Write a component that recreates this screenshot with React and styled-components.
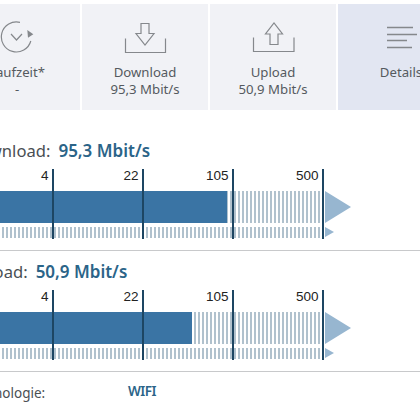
import styled, { createGlobalStyle } from "styled-components";

const GlobalStyle = createGlobalStyle`
  html, body {
    margin: 0;
    padding: 0;
    background: #fff;
  }
  body {
    width: 420px;
    height: 420px;
    overflow: hidden;
    font-family: "Noto Sans", "Open Sans", sans-serif;
  }
`;

const Page = styled.div`
  width: 466px;
  margin-left: -46px;
  padding-top: 4px;
`;

const TileRow = styled.div`
  display: flex;
  gap: 2px;
  width: 600px;
`;

const Tile = styled.div`
  width: 126px;
  height: 106px;
  flex: none;
  display: flex;
  flex-direction: column;
  align-items: center;
  background: ${(p) => (p.$active ? "#e2e6f2" : "#f1f2f6")};
  color: #555a5f;
  font-size: 13.2px;
  line-height: 17px;
  text-align: center;
`;

const IconSlot = styled.div`
  height: 54px;
  margin-bottom: 6px;
  svg {
    display: block;
  }
`;

const Section = styled.section`
  padding-top: ${(p) => p.$top}px;
  border-bottom: 1px solid #c8c9cb;
  padding-bottom: 11px;
`;

const Heading = styled.div`
  display: flex;
  gap: 8px;
  padding-left: 13px;
  font-size: 16.6px;
  line-height: 22px;
  color: #4a4f54;
`;

const Value = styled.span`
  color: #2b6488;
  font-weight: 600;
  font-size: 17px;
`;

const Chart = styled.div`
  position: relative;
  width: 400px;
  height: 70px;
  margin-top: 7px;
  padding-top: 22px;
  box-sizing: border-box;
`;

const Track = styled.div`
  position: relative;
  width: 369px;
  height: ${(p) => p.$h}px;
  margin-bottom: 4px;
  background: repeating-linear-gradient(
    90deg,
    #b0c1cd 0,
    #b0c1cd 2px,
    #fff 2px,
    #fff 4px
  );
`;

const Fill = styled.div`
  height: 100%;
  background: #3a74a4;
`;

const Arrow = styled.div`
  position: absolute;
  left: 100%;
  top: 0;
  width: 0;
  height: 0;
  margin-left: 2px;
  border-style: solid;
  border-color: transparent transparent transparent #97b6d0;
  border-width: ${(p) => p.$h / 2}px 0 ${(p) => p.$h / 2}px ${(p) => p.$w}px;
`;

const Tick = styled.div`
  position: absolute;
  top: 0;
  bottom: 0;
  left: ${(p) => p.$x}px;
  width: 1.5px;
  background: #1d4663;
`;

const TickLabel = styled.span`
  position: absolute;
  right: 5px;
  top: 0;
  font-family: "Liberation Sans", Arial, sans-serif;
  font-size: 13.5px;
  line-height: 14px;
  color: #222;
`;

const Footer = styled.div`
  display: flex;
  align-items: flex-start;
  padding-top: 10px;
  font-size: 13.5px;
  line-height: 20px;
  color: #4a4f54;
`;

const FooterLabel = styled.span`
  width: 174px;
  padding: 1px 0 0 11px;
  box-sizing: border-box;
`;

const FooterValue = styled.span`
  color: #2b6488;
  font-weight: 600;
  letter-spacing: -0.5px;
  margin-top: -1px;
`;

const stroke = { fill: "none", stroke: "#85888c", strokeWidth: 1.2 };

const RefreshIcon = () => (
  <svg width="126" height="54" viewBox="0 0 126 54">
    <path d="M66 18.4 A15 15 0 1 0 76.8 37" {...stroke} />
    <path d="M57 30 l5.5 6 l5.5 -6" {...stroke} />
    <path d="M73.3 26 L79.3 30.3 L74 33.7 Z" fill="#85888c" />
  </svg>
);

const DownloadIcon = () => (
  <svg width="126" height="54" viewBox="0 0 126 54">
    <path d="M43.5 34.5 V48.5 H83.5 V34.5" {...stroke} />
    <path d="M59 19.5 H67 V29.5 H72 L63 41 L54 29.5 H59 Z" {...stroke} />
  </svg>
);

const UploadIcon = () => (
  <svg width="126" height="54" viewBox="0 0 126 54">
    <path d="M43.5 33.5 V47.5 H84 V33.5" {...stroke} />
    <path d="M60 40.5 H68 V30 H72.5 L64 19 L55.5 30 H60 Z" {...stroke} />
  </svg>
);

const LinesIcon = () => (
  <svg width="126" height="54" viewBox="0 0 126 54">
    <path d="M49 23.5 H75 M49 30.5 H79 M49 36.5 H69 M49 43.5 H74" fill="none" stroke="#85888c" strokeWidth="1.3" />
  </svg>
);

const marks = [
  { x: 98, label: "4" },
  { x: 188, label: "22" },
  { x: 278, label: "105" },
  { x: 368, label: "500" },
];

const SpeedChart = ({ fill }) => (
  <Chart>
    <Track $h={32}>
      <Fill style={{ width: fill }} />
      <Arrow $h={32} $w={26} />
    </Track>
    <Track $h={11}>
      <Arrow $h={11} $w={9} />
    </Track>
    {marks.map((m) => (
      <Tick key={m.label} $x={m.x}>
        <TickLabel>{m.label}</TickLabel>
      </Tick>
    ))}
  </Chart>
);

const App = () => (
  <Page>
    <GlobalStyle />
    <TileRow>
      <Tile>
        <IconSlot><RefreshIcon /></IconSlot>
        <span>Laufzeit*</span>
        <span>-</span>
      </Tile>
      <Tile>
        <IconSlot><DownloadIcon /></IconSlot>
        <span>Download</span>
        <span>95,3 Mbit/s</span>
      </Tile>
      <Tile>
        <IconSlot><UploadIcon /></IconSlot>
        <span>Upload</span>
        <span>50,9 Mbit/s</span>
      </Tile>
      <Tile $active>
        <IconSlot><LinesIcon /></IconSlot>
        <span>Details</span>
      </Tile>
    </TileRow>
    <Section $top={30}>
      <Heading>
        <span>Download:</span>
        <Value>95,3 Mbit/s</Value>
      </Heading>
      <SpeedChart fill={273} />
    </Section>
    <Section $top={10}>
      <Heading>
        <span>Upload:</span>
        <Value>50,9 Mbit/s</Value>
      </Heading>
      <SpeedChart fill={238} />
    </Section>
    <Footer>
      <FooterLabel>Technologie:</FooterLabel>
      <FooterValue>WIFI</FooterValue>
    </Footer>
  </Page>
);

export default App;
